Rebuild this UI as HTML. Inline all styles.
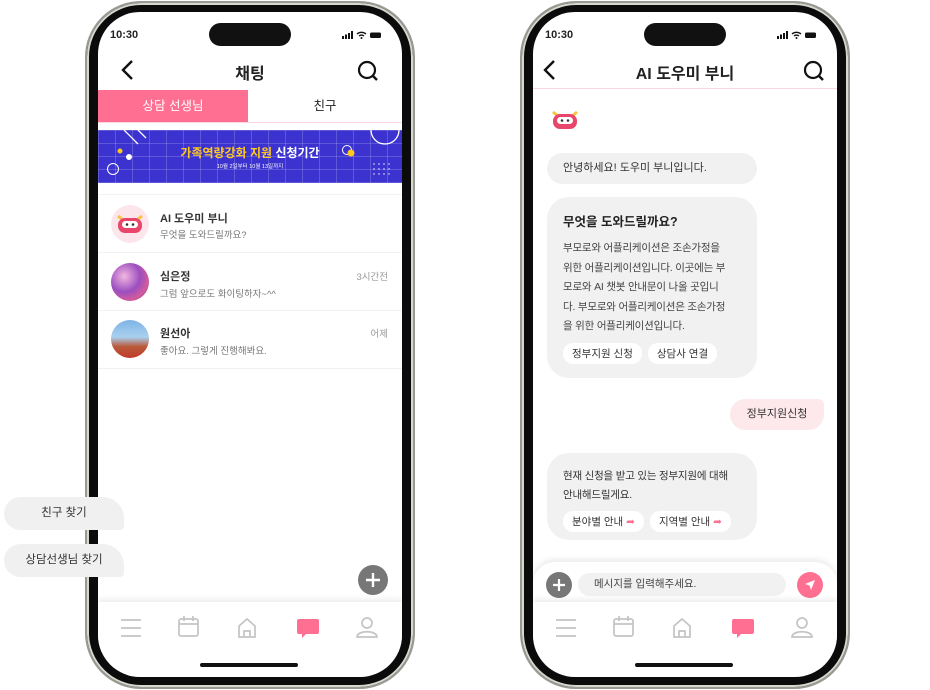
<!DOCTYPE html>
<html><head><meta charset="utf-8"><style>
*{margin:0;padding:0;box-sizing:border-box}
body{width:930px;height:690px;background:#fff;position:relative;overflow:hidden;font-family:"Liberation Sans","Noto Sans CJK KR",sans-serif;color:#222}
.a{position:absolute}
.phone{position:absolute;top:1px;width:330px;height:688px;border-radius:56px;background:#0b0b0b;border:2px solid #9a9a94;box-shadow:inset 0 0 0 2px #d8d8d0}
.screen{position:absolute;top:9px;left:11px;width:304px;height:665px;border-radius:42px;background:#fff;overflow:hidden}
.island{position:absolute;left:111px;top:11px;width:82px;height:23px;border-radius:12px;background:#111}
.time{position:absolute;left:12px;top:17px;font-size:11px;font-weight:bold}
.home{position:absolute;left:102px;top:651px;width:98px;height:4px;border-radius:2px;background:#111}
.nav{position:absolute;left:0;top:590px;width:304px;height:50px;background:#fff;box-shadow:0 -3px 5px rgba(0,0,0,.07)}
.bub{position:absolute;background:#f1f1f1;border-radius:17px;font-size:11px;color:#333}
.chip{display:inline-block;background:#fff;border-radius:10px;font-size:10.5px;padding:3px 9px;margin-right:6px;color:#333}
.item .n{position:absolute;left:62px;font-size:11px;font-weight:bold;color:#333}
.item .s{position:absolute;left:62px;font-size:9.5px;color:#777}
.fl{position:absolute;z-index:5;width:120px;height:33px;background:#f0f0f0;border-radius:17px 22px 4px 17px;font-size:11.5px;text-align:center;line-height:33px;color:#333}
</style></head><body>

<div class="fl" style="left:4px;top:497px">친구 찾기</div>
<div class="fl" style="left:4px;top:544px">상담선생님 찾기</div>

<!-- PHONE 1 -->
<div class="phone" style="left:85px">
 <div class="screen">
  <div class="time">10:30</div>
  <div class="island"></div>
  <svg class="a" style="left:244px;top:18px" width="50" height="10" viewBox="0 0 50 10"><rect x="0" y="6" width="2" height="3" fill="#111"/><rect x="3" y="4.5" width="2" height="4.5" fill="#111"/><rect x="6" y="3" width="2" height="6" fill="#111"/><rect x="9" y="1" width="2" height="8" fill="#111"/><path d="M15 4a7 7 0 0 1 9 0M17 6a4 4 0 0 1 5 0" stroke="#111" stroke-width="1.4" fill="none"/><circle cx="19.5" cy="8" r="1" fill="#111"/><rect x="28" y="2.5" width="11" height="5.5" rx="1.5" fill="#111"/></svg>
  <svg class="a" style="left:22px;top:47px" width="16" height="22"><path d="M12 2 3 11l9 9" stroke="#111" stroke-width="2.4" fill="none"/></svg>
  <div class="a" style="left:0;width:304px;top:48px;text-align:center;font-size:16px;font-weight:bold">채팅</div>
  <svg class="a" style="left:259px;top:48px" width="22" height="22"><circle cx="10" cy="10" r="8" stroke="#111" stroke-width="2.2" fill="none"/><path d="M16 16l4 4" stroke="#111" stroke-width="2.4"/></svg>
  <div class="a" style="left:0;top:78px;width:150px;height:32px;background:#ff6f91;color:#fff;font-size:12.5px;text-align:center;line-height:32px">상담 선생님</div>
  <div class="a" style="left:150px;top:78px;width:154px;height:32px;color:#222;font-size:12.5px;text-align:center;line-height:32px">친구</div>
  <div class="a" style="left:0;top:110px;width:304px;height:1px;background:#fbd6df"></div>
  <div class="a" style="left:0;top:118px;width:304px;height:53px;background:#3b32cf;overflow:hidden;background-image:linear-gradient(rgba(255,255,255,.18) 1px,transparent 1px),linear-gradient(90deg,rgba(255,255,255,.18) 1px,transparent 1px);background-size:17px 13px">
   <svg class="a" style="left:0;top:0" width="304" height="53"><path d="M26 0l14 14M40 0l8 8" stroke="#fff" stroke-width="1.3"/><circle cx="22" cy="21" r="2.5" fill="#ffc81e"/><circle cx="31" cy="27" r="3" fill="#fff"/><circle cx="15" cy="39" r="5.5" stroke="#fff" fill="none"/><circle cx="287" cy="0" r="14" stroke="#fff" stroke-width="1.3" fill="none"/><circle cx="249" cy="20" r="4.5" stroke="#fff" fill="none"/><circle cx="253" cy="23" r="3.5" fill="#ffc81e"/><g fill="#fff"><circle cx="276" cy="34" r=".7"/><circle cx="281" cy="34" r=".7"/><circle cx="286" cy="34" r=".7"/><circle cx="291" cy="34" r=".7"/><circle cx="276" cy="39" r=".7"/><circle cx="281" cy="39" r=".7"/><circle cx="286" cy="39" r=".7"/><circle cx="291" cy="39" r=".7"/><circle cx="276" cy="44" r=".7"/><circle cx="281" cy="44" r=".7"/><circle cx="286" cy="44" r=".7"/><circle cx="291" cy="44" r=".7"/></g></svg>
   <div class="a" style="left:0;width:304px;top:14px;text-align:center;font-size:12px;font-weight:bold;color:#ffc81e">가족역량강화 지원 <span style="color:#fff">신청기간</span></div>
   <div class="a" style="left:0;width:304px;top:32px;text-align:center;font-size:5.5px;color:#fff">10월 2일부터 10월 13일까지</div>
  </div>
  <div class="a" style="left:0;top:182px;width:304px;height:1px;background:#f3f3f3"></div>
  <div class="item">
   <div class="a" style="left:13px;top:193px;width:38px;height:38px;border-radius:50%;background:#fde6eb"></div>
   <svg class="a" style="left:17px;top:200px" width="30" height="24" viewBox="0 0 30 24"><path d="M3 4l5 4M27 4l-5 4" stroke="#f5c542" stroke-width="3"/><rect x="3" y="6" width="24" height="15" rx="7" fill="#e9466b"/><rect x="7" y="9" width="16" height="7" rx="3.5" fill="#fff"/><circle cx="12" cy="12.5" r="1.3" fill="#333"/><circle cx="18" cy="12.5" r="1.3" fill="#333"/></svg>
   <div class="n" style="top:198px">AI 도우미 부니</div>
   <div class="s" style="top:215px">무엇을 도와드릴까요?</div>
  </div>
  <div class="a" style="left:0;top:240px;width:304px;height:1px;background:#f2f2f2"></div>
  <div class="item">
   <div class="a" style="left:13px;top:251px;width:38px;height:38px;border-radius:50%;background:radial-gradient(circle at 35% 35%,#f3b6e0,#9b4fc0 45%,#d45a9d 70%,#5c3a7a)"></div>
   <div class="n" style="top:256px">심은정</div>
   <div class="s" style="top:274px">그럼 앞으로도 화이팅하자~^^</div>
   <div class="a" style="right:14px;top:257px;font-size:9.5px;color:#999">3시간전</div>
  </div>
  <div class="a" style="left:0;top:298px;width:304px;height:1px;background:#f2f2f2"></div>
  <div class="item">
   <div class="a" style="left:13px;top:308px;width:38px;height:38px;border-radius:50%;background:linear-gradient(180deg,#7fb4e6 0%,#a9d0ee 45%,#b95a3a 70%,#c23a2a 100%)"></div>
   <div class="n" style="top:313px">원선아</div>
   <div class="s" style="top:331px">좋아요. 그렇게 진행해봐요.</div>
   <div class="a" style="right:14px;top:314px;font-size:9.5px;color:#999">어제</div>
  </div>
  <div class="a" style="left:0;top:356px;width:304px;height:1px;background:#f2f2f2"></div>
  <div class="a" style="left:260px;top:553px;width:30px;height:30px;border-radius:50%;background:#777"></div>
  <svg class="a" style="left:260px;top:553px" width="30" height="30"><path d="M15 8v14M8 15h14" stroke="#fff" stroke-width="2.4"/></svg>
  <div class="nav">
   <svg class="a" style="left:0;top:0" width="304" height="50" viewBox="0 0 304 50"><g stroke="#c4c4c4" stroke-width="1.7" fill="none"><path d="M23 18h20M23 26h20M23 34h20"/><rect x="81" y="17" width="19" height="17" rx="2"/><path d="M81 22h19M86 14v5M95 14v5"/><path d="M141 24l8-7 8 7v11h-16z"/><path d="M146 35v-6h6v6"/><circle cx="269" cy="21" r="5"/><path d="M259 35c0-7 20-7 20 0z"/></g><path d="M201 17h18a2 2 0 0 1 2 2v11a2 2 0 0 1-2 2h-11l-4 4v-4h-3a2 2 0 0 1-2-2v-11a2 2 0 0 1 2-2z" fill="#ff6f91"/></svg>
  </div>
  <div class="home"></div>
 </div>
</div>

<!-- PHONE 2 -->
<div class="phone" style="left:520px">
 <div class="screen">
  <div class="time">10:30</div>
  <div class="island"></div>
  <svg class="a" style="left:244px;top:18px" width="50" height="10" viewBox="0 0 50 10"><rect x="0" y="6" width="2" height="3" fill="#111"/><rect x="3" y="4.5" width="2" height="4.5" fill="#111"/><rect x="6" y="3" width="2" height="6" fill="#111"/><rect x="9" y="1" width="2" height="8" fill="#111"/><path d="M15 4a7 7 0 0 1 9 0M17 6a4 4 0 0 1 5 0" stroke="#111" stroke-width="1.4" fill="none"/><circle cx="19.5" cy="8" r="1" fill="#111"/><rect x="28" y="2.5" width="11" height="5.5" rx="1.5" fill="#111"/></svg>
  <svg class="a" style="left:9px;top:47px" width="16" height="22"><path d="M12 2 3 11l9 9" stroke="#111" stroke-width="2.4" fill="none"/></svg>
  <div class="a" style="left:0;width:304px;top:48px;text-align:center;font-size:16px;font-weight:bold">AI 도우미 부니</div>
  <svg class="a" style="left:270px;top:48px" width="22" height="22"><circle cx="10" cy="10" r="8" stroke="#111" stroke-width="2.2" fill="none"/><path d="M16 16l4 4" stroke="#111" stroke-width="2.4"/></svg>
  <div class="a" style="left:0;top:76px;width:304px;height:1px;background:#fbd6df"></div>
  <svg class="a" style="left:17px;top:96px" width="30" height="24" viewBox="0 0 30 24"><path d="M3 4l5 4M27 4l-5 4" stroke="#f5c542" stroke-width="3"/><rect x="3" y="6" width="24" height="15" rx="7" fill="#e9466b"/><rect x="7" y="9" width="16" height="7" rx="3.5" fill="#fff"/><circle cx="12" cy="12.5" r="1.3" fill="#333"/><circle cx="18" cy="12.5" r="1.3" fill="#333"/></svg>
  <div class="bub" style="left:14px;top:141px;width:210px;height:31px;line-height:31px;padding-left:16px">안녕하세요! 도우미 부니입니다.</div>
  <div class="bub" style="left:14px;top:185px;width:210px;height:181px;border-radius:22px;padding:14px 16px">
   <div style="font-size:12.5px;font-weight:bold;color:#222;margin-bottom:9px">무엇을 도와드릴까요?</div>
   <div style="font-size:10.5px;line-height:19.5px;color:#444;white-space:nowrap;letter-spacing:-0.2px">부모로와 어플리케이션은 조손가정을<br>위한 어플리케이션입니다. 이곳에는 부<br>모로와 AI 챗봇 안내문이 나올 곳입니<br>다. 부모로와 어플리케이션은 조손가정<br>을 위한 어플리케이션입니다.</div>
   <div style="margin-top:6px;white-space:nowrap"><span class="chip">정부지원 신청</span><span class="chip">상담사 연결</span></div>
  </div>
  <div class="a" style="left:197px;top:387px;width:94px;height:31px;background:#fde8ec;border-radius:16px 6px 16px 16px;font-size:11px;line-height:31px;text-align:center;color:#333">정부지원신청</div>
  <div class="bub" style="left:14px;top:441px;width:210px;height:87px;border-radius:22px;padding:14px 16px 0">
   <div style="font-size:10.5px;line-height:19px;color:#333;white-space:nowrap;letter-spacing:-0.2px">현재 신청을 받고 있는 정부지원에 대해<br>안내해드릴게요.</div>
   <div style="margin-top:6px;white-space:nowrap"><span class="chip">분야별 안내 <span style="color:#ff6f91">➦</span></span><span class="chip">지역별 안내 <span style="color:#ff6f91">➦</span></span></div>
  </div>
  <div class="a" style="left:0;top:550px;width:304px;height:50px;background:#fff;border-radius:22px 22px 0 0;box-shadow:0 -3px 6px rgba(0,0,0,.08)"></div>
  <div class="a" style="left:13px;top:560px;width:26px;height:26px;border-radius:50%;background:#777"></div>
  <svg class="a" style="left:13px;top:560px" width="26" height="26"><path d="M13 7v12M7 13h12" stroke="#fff" stroke-width="2.2"/></svg>
  <div class="a" style="left:45px;top:561px;width:208px;height:23px;border-radius:12px;background:#f1f1f1;font-size:10.5px;line-height:23px;padding-left:16px;color:#444">메시지를 입력해주세요.</div>
  <div class="a" style="left:264px;top:560px;width:26px;height:26px;border-radius:50%;background:#ff6f91"></div>
  <svg class="a" style="left:264px;top:560px" width="26" height="26"><path d="M8 12l10-4-4 10-1.5-4.5z" fill="#fff"/></svg>
  <div class="nav">
   <svg class="a" style="left:0;top:0" width="304" height="50" viewBox="0 0 304 50"><g stroke="#c4c4c4" stroke-width="1.7" fill="none"><path d="M23 18h20M23 26h20M23 34h20"/><rect x="81" y="17" width="19" height="17" rx="2"/><path d="M81 22h19M86 14v5M95 14v5"/><path d="M141 24l8-7 8 7v11h-16z"/><path d="M146 35v-6h6v6"/><circle cx="269" cy="21" r="5"/><path d="M259 35c0-7 20-7 20 0z"/></g><path d="M201 17h18a2 2 0 0 1 2 2v11a2 2 0 0 1-2 2h-11l-4 4v-4h-3a2 2 0 0 1-2-2v-11a2 2 0 0 1 2-2z" fill="#ff6f91"/></svg>
  </div>
  <div class="home"></div>
 </div>
</div>
</body></html>
